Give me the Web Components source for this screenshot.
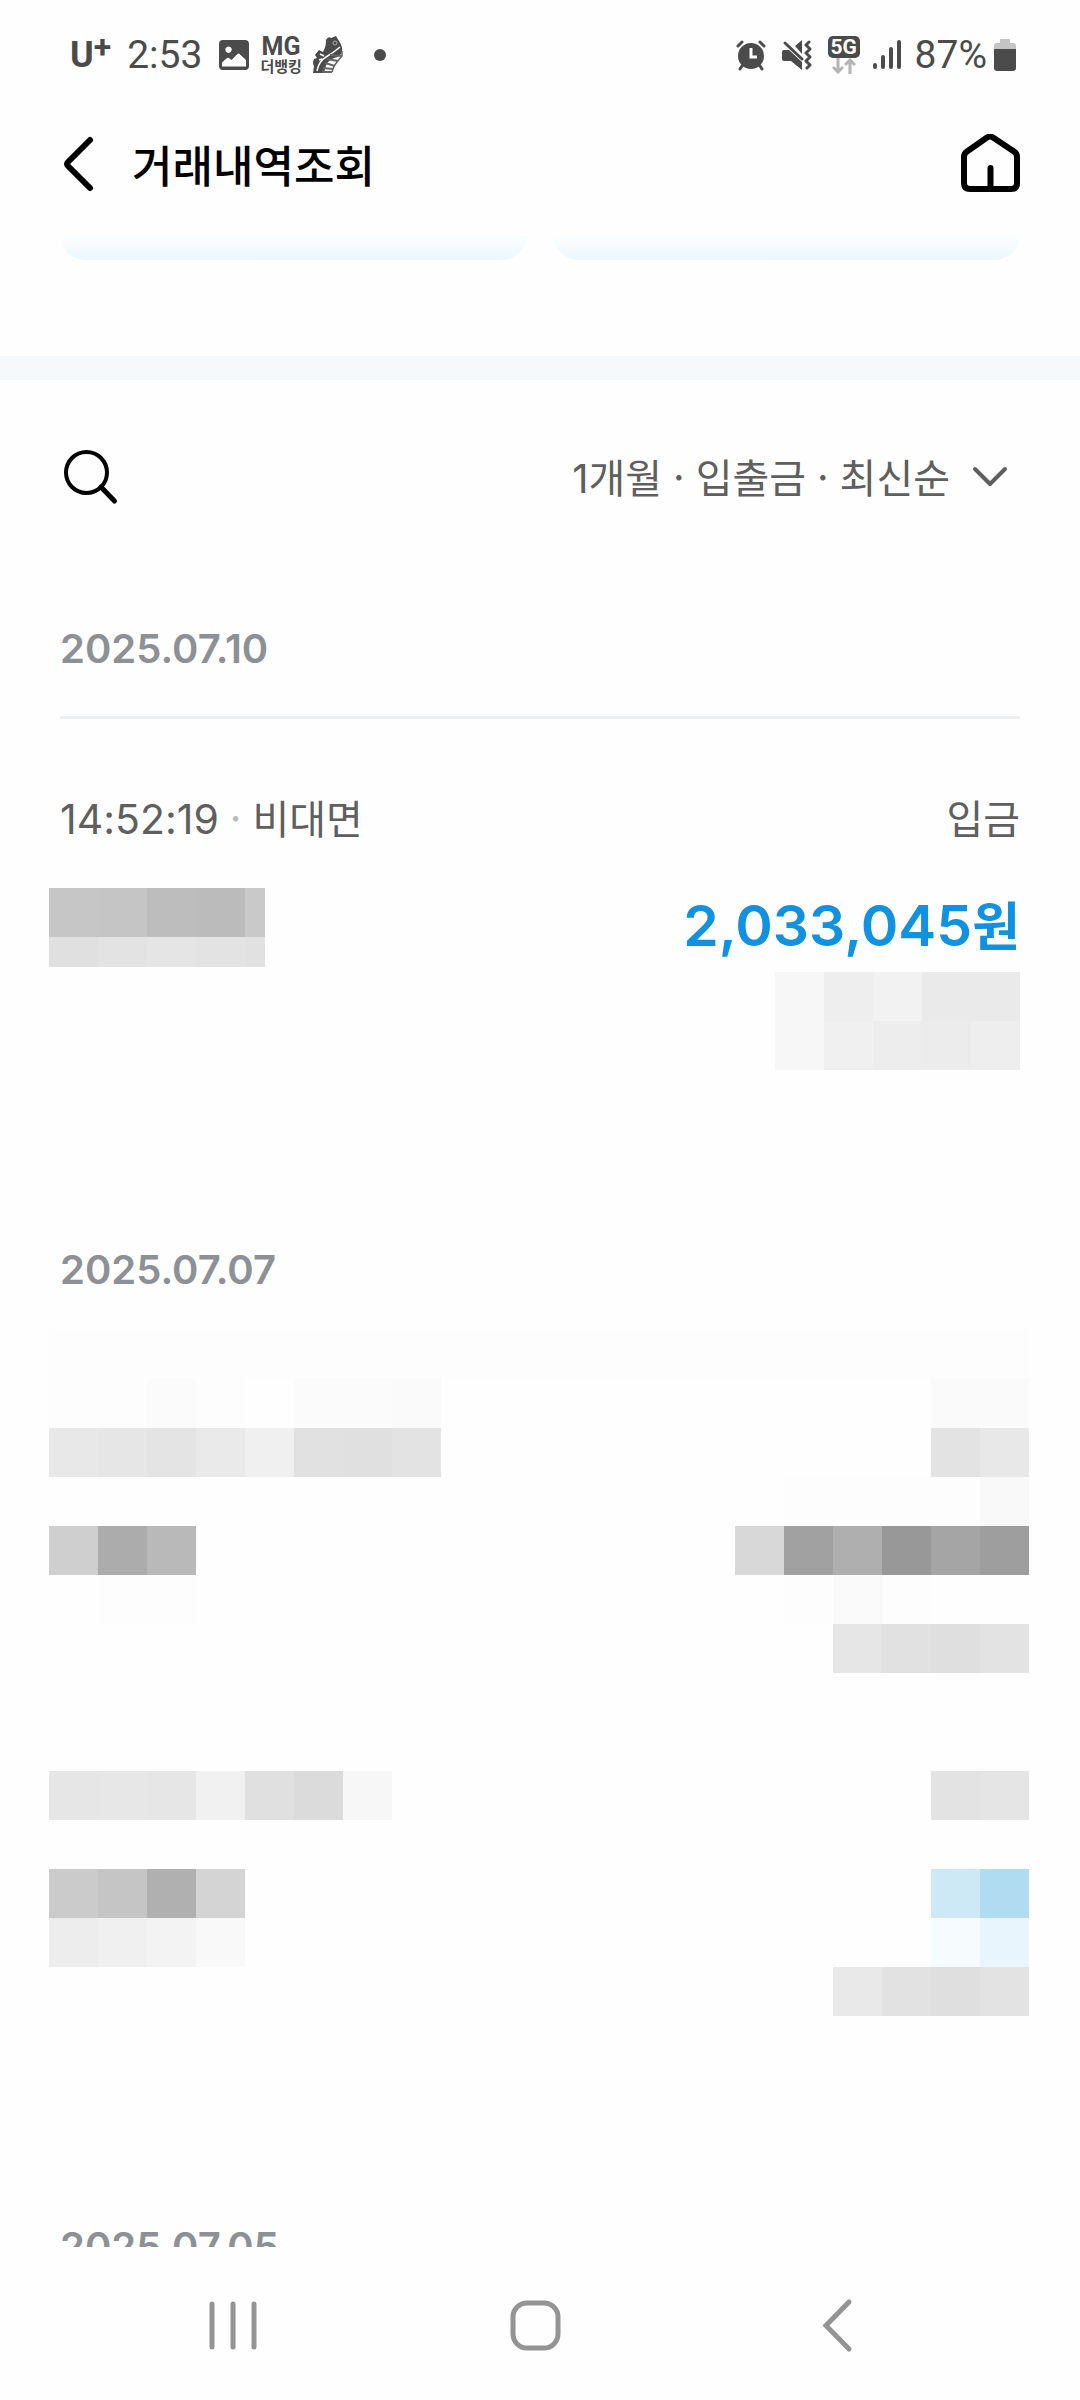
<!DOCTYPE html>
<html lang="ko">
<head>
<meta charset="utf-8">
<meta name="viewport" content="width=device-width, initial-scale=1">
<title>거래내역조회</title>
<style>
  html, body {
    margin: 0;
    background: #fefefe;
  }

  body {
    font-family: Inter, "Noto Sans CJK KR", sans-serif;
    color: #5f5f5f;
  }
</style>
</head>
<body>
<app-shell>
  <status-bar slot="top"></status-bar>
  <page-header slot="top">거래내역조회</page-header>

  <account-actions></account-actions>
  <history-filter period="1" unit="개월">입출금 · 최신순</history-filter>

  <day-group date="2025.07.10" line>
    <history-entry time="14:52:19" method="비대면" kind="입금" amount="2,033,045">
      <pixel-mask slot="name" class="crop" rows="c6 c5 bd bb c9|e0 e3 e5 e3 e1"></pixel-mask>
      <pixel-mask slot="balance" rows="f7 ee f2 ea ea|f7 f0 ed ec ee"></pixel-mask>
    </history-entry>
  </day-group>

  <day-group date="2025.07.07">
    <masked-entry divider>
      <pixel-mask rows="fd fd fb fd - fb fb fa|e8 e6 e4 ea f0 e1 e0 e3|-|cf ac b9|- fd fd"></pixel-mask>
      <pixel-mask slot="end" rows="- - - - fa fa|- - - - e3 e8|- fd fd fd fd f9|d8 a1 af 98 a5 9e|- fd fa fd - -|- - e6 e1 df e3"></pixel-mask>
    </masked-entry>
    <masked-entry>
      <pixel-mask rows="e6 e7 e6 f1 e0 db f7|-|cb c5 b0 d4|ed f0 f3 f9"></pixel-mask>
      <pixel-mask slot="end" rows="- - e3 e5|-|- - cee9f6 b1dbf1|- - f6fbfe e8f5fc|e9 e2 df e3"></pixel-mask>
    </masked-entry>
  </day-group>

  <day-group date="2025.07.05"></day-group>

  <system-nav slot="bottom"></system-nav>
</app-shell>

<script>
class AppShell extends HTMLElement {
  connectedCallback() {
    this.attachShadow({ mode: 'open' });
    this.shadowRoot.innerHTML = `
      <style>
        :host {
          display: flex;
          flex-direction: column;
          height: 100vh;
          overflow: hidden;
        }

        main {
          flex: 1;
          min-height: 0;
          overflow: hidden;
        }
      </style>
      <slot name="top"></slot>
      <main><slot></slot></main>
      <slot name="bottom"></slot>
    `;
  }
}

class StatusBar extends HTMLElement {
  connectedCallback() {
    this.attachShadow({ mode: 'open' });
    this.shadowRoot.innerHTML = `
      <style>
        :host {
          display: flex;
          justify-content: space-between;
          align-items: center;
          height: 110px;
          padding: 0 64px 0 70px;
          box-sizing: border-box;
          font-family: Roboto, "Noto Sans CJK KR", sans-serif;
          color: #4b4b4b;
        }

        .group {
          display: flex;
          align-items: center;
        }

        svg {
          display: block;
        }

        .carrier {
          display: flex;
          align-items: flex-start;
          font-size: 36px;
          line-height: 36px;
          font-weight: 700;
        }

        .carrier sup {
          font-size: 32px;
          line-height: 20px;
          vertical-align: top;
        }

        .time {
          margin-left: 16px;
          font-size: 39px;
          line-height: 40px;
        }

        .photo {
          margin-left: 17px;
        }

        .bank {
          display: flex;
          flex-direction: column;
          align-items: center;
          margin-left: 11px;
          font-size: 25px;
          line-height: 24px;
          font-weight: 700;
        }

        .bank small {
          font-size: 15px;
          line-height: 16px;
        }

        .shoe {
          margin-left: 10px;
        }

        .dot {
          width: 12px;
          height: 12px;
          margin-left: 30px;
          border-radius: 50%;
          background: currentColor;
        }

        .mute {
          margin-left: 16px;
        }

        .network {
          display: flex;
          flex-direction: column;
          align-items: center;
          margin-left: 16px;
        }

        .network span {
          width: 32px;
          border-radius: 5px;
          background: #4b4b4b;
          color: #fefefe;
          font-size: 21px;
          line-height: 22px;
          font-weight: 700;
          text-align: center;
        }

        .signal {
          margin-left: 13px;
        }

        .level {
          margin-left: 14px;
          font-size: 39px;
          line-height: 40px;
        }

        .battery {
          margin-left: 7px;
        }
      </style>
      <div class="group">
        <div class="carrier">U<sup>+</sup></div>
        <div class="time">2:53</div>
        <svg class="photo" width="30" height="30" viewBox="0 0 30 30">
          <path fill="currentColor" fill-rule="evenodd" d="M4 0H26Q30 0 30 4V26Q30 30 26 30H4Q0 30 0 26V4Q0 0 4 0ZM9.500 6.500a3.200 3.200 0 1 0 0.010 0ZM3 22.500V26.500H27V20L20.500 14Q19.500 13.200 18.500 14L12.500 20L10 18Q9 17.400 8 18Z"/>
        </svg>
        <div class="bank">MG<small>더뱅킹</small></div>
        <svg class="shoe" width="32" height="40" viewBox="0 0 32 40">
          <path fill="#4b4b4b" d="M14 5Q16 1 19 3L24 1L27 6Q31 12 30 17Q28 22 22 23Q14 25 12 38H1L2 31Q0 28 2 24L5 23L3 20L7 15L11 17Q14 12 14 5Z"/>
          <path fill="none" stroke="#fefefe" stroke-width="1.500" d="M5 36Q7 26 14 22T28 12M7 25L10 24M8 19L12 21"/>
          <circle cx="23" cy="8" r="2" fill="none" stroke="#aaa" stroke-width="1"/>
          <path fill="none" stroke="#666" stroke-width="2" d="M18 20L30 21M15 24L26 26M13 28L23 31M11 33L21 34M10 37H20"/>
          <path fill="none" stroke="#666" stroke-width="1.500" d="M30 16V21L25 27L22 31L20 37"/>
        </svg>
        <div class="dot"></div>
      </div>
      <div class="group">
        <svg width="30" height="32" viewBox="0 0 30 32" fill="none" stroke="currentColor" stroke-linecap="round">
          <circle cx="15" cy="17" r="13" fill="currentColor" stroke="none"/>
          <path stroke-width="3" d="M2 7L6 3M28 7L24 3M6 27L4 30M24 27L26 30"/>
          <path stroke="#fefefe" stroke-width="3" stroke-linecap="butt" d="M15 9V18H21"/>
        </svg>
        <svg class="mute" width="30" height="32" viewBox="0 0 30 32" fill="none" stroke="currentColor">
          <path fill="currentColor" stroke="none" d="M0 13Q0 11 2 11H7L20 23V31L9 22H2Q0 22 0 20ZM13 7L20 1V15Z"/>
          <path stroke-width="3" stroke-linecap="round" d="M3 4L20 20"/>
          <path stroke-width="3" stroke-linejoin="round" stroke-linecap="round" d="M27 3L24 6L28 10L24 14L28 18L24 22L28 26L25 29"/>
        </svg>
        <div class="network">
          <span>5G</span>
          <svg width="24" height="16" viewBox="0 0 24 16" fill="none" stroke="#b4b4b4" stroke-width="3">
            <path d="M6 0V14M1 9L6 14L11 9M18 16V2M13 7L18 2L23 7"/>
          </svg>
        </div>
        <svg class="signal" width="28" height="32" viewBox="0 0 28 32" stroke="currentColor" stroke-width="4" stroke-linecap="round">
          <path d="M2 26V28M10 18V28M18 10V28M26 3V28"/>
        </svg>
        <div class="level">87%</div>
        <svg class="battery" width="22" height="32" viewBox="0 0 22 32">
          <path fill="#c4c4c4" d="M6 0H16V4H19Q22 4 22 7V12H0V7Q0 4 3 4H6Z"/>
          <path fill="currentColor" d="M0 10H22V29Q22 32 19 32H3Q0 32 0 29Z"/>
        </svg>
      </div>
    `;
  }
}

class PageHeader extends HTMLElement {
  connectedCallback() {
    this.attachShadow({ mode: 'open' });
    this.shadowRoot.innerHTML = `
      <style>
        :host {
          display: flex;
          align-items: center;
          height: 108px;
          padding: 0 60px;
          box-sizing: border-box;
          color: #000;
        }

        button, a {
          display: block;
          padding: 0;
          border: 0;
          background: none;
          color: inherit;
        }

        svg {
          display: block;
        }

        h1 {
          flex: 1;
          margin: 0 0 0 36px;
          font-family: "Noto Sans CJK KR", sans-serif;
          font-size: 44px;
          line-height: 60px;
          font-weight: 500;
        }
      </style>
      <button type="button" aria-label="뒤로">
        <svg width="36" height="60" viewBox="0 0 36 60" fill="none" stroke="currentColor" stroke-width="6" stroke-linecap="round" stroke-linejoin="round">
          <path d="M30 6L8 28Q6 30 8 32L30 54"/>
        </svg>
      </button>
      <h1><slot></slot></h1>
      <a href="#" aria-label="홈">
        <svg width="60" height="60" viewBox="0 0 60 60" fill="none" stroke="currentColor" stroke-width="6" stroke-linecap="round" stroke-linejoin="round">
          <path d="M27 3.500Q30 1.500 33 3.500L54 17.500Q57 19.500 57 23V49Q57 55 51 55H10Q4 55 4 49V23Q4 19.500 7 17.500ZM30.500 34V55"/>
        </svg>
      </a>
    `;
  }
}

// Bottom edge of the two action cards, scrolled under the header
class AccountActions extends HTMLElement {
  connectedCallback() {
    this.attachShadow({ mode: 'open' });
    this.shadowRoot.innerHTML = `
      <style>
        :host {
          display: grid;
          grid-template-columns: 1fr 1fr;
          gap: 26px;
          padding: 0 60px 96px;
          border-bottom: 24px solid #f7f8fa;
        }

        div {
          height: 42px;
          border-radius: 0 0 26px 26px;
          background: linear-gradient(#fefefe 40%, #ebf7fe);
        }
      </style>
      <div></div>
      <div></div>
    `;
  }
}

class HistoryFilter extends HTMLElement {
  connectedCallback() {
    this.attachShadow({ mode: 'open' });
    this.shadowRoot.innerHTML = `
      <style>
        :host {
          display: flex;
          justify-content: space-between;
          align-items: center;
          height: 194px;
          padding: 0 60px;
        }

        button {
          display: flex;
          align-items: center;
          padding: 0;
          border: 0;
          background: none;
          color: #5f5f5f;
          font-family: "Noto Sans CJK KR", sans-serif;
          font-size: 40px;
          line-height: 60px;
        }

        svg {
          display: block;
        }

        .search {
          color: #000;
        }

        .period {
          font-family: Inter, sans-serif;
        }

        .sort {
          gap: 22px;
          padding-right: 12px;
        }
      </style>
      <button type="button" class="search" aria-label="검색">
        <svg width="60" height="60" viewBox="0 0 60 60" fill="none" stroke="currentColor" stroke-width="4" stroke-linecap="round">
          <circle cx="26.500" cy="25.500" r="20.500"/>
          <path stroke-width="5" d="M41 40L54.500 54"/>
        </svg>
      </button>
      <button type="button" class="sort">
        <span><span class="period">${this.getAttribute('period')}</span>${this.getAttribute('unit')} · <slot></slot></span>
        <svg width="36" height="24" viewBox="0 0 36 24" fill="none" stroke="currentColor" stroke-width="4" stroke-linecap="round" stroke-linejoin="round">
          <path d="M3 4L18 19L33 4"/>
        </svg>
      </button>
    `;
  }
}

class DayGroup extends HTMLElement {
  connectedCallback() {
    this.attachShadow({ mode: 'open' });
    this.shadowRoot.innerHTML = `
      <style>
        :host {
          display: block;
          padding-top: 51px;
        }

        h2 {
          margin: 0 60px;
          color: #8d9095;
          font-size: 40px;
          line-height: 48px;
          font-weight: 600;
        }

        :host([line]) h2 {
          padding-bottom: 43px;
          border-bottom: 3px solid #eceef2;
        }
      </style>
      <h2>${this.getAttribute('date')}</h2>
      <slot></slot>
    `;
  }
}

class HistoryEntry extends HTMLElement {
  connectedCallback() {
    this.attachShadow({ mode: 'open' });
    this.shadowRoot.innerHTML = `
      <style>
        :host {
          display: block;
          padding: 77px 60px 125px;
          font-size: 40px;
          line-height: 48px;
        }

        .row {
          display: flex;
          justify-content: space-between;
          align-items: flex-start;
        }

        .time {
          font-size: 41px;
          line-height: 1;
        }

        .sep {
          font-family: "Noto Sans CJK KR", sans-serif;
          line-height: 1;
          color: #b6b9bd;
        }

        .detail {
          margin-top: 44px;
        }

        .name {
          margin-left: -11px;
        }

        .sum {
          display: flex;
          flex-direction: column;
          align-items: flex-end;
          gap: 8px;
        }

        .amount {
          color: #1192e0;
          font-size: 57px;
          line-height: 76px;
          font-weight: 600;
        }

        .won {
          font-size: 52px;
          line-height: 1;
        }
      </style>
      <div class="row">
        <div><span class="time">${this.getAttribute('time')}</span><span class="sep"> · </span>${this.getAttribute('method')}</div>
        <div>${this.getAttribute('kind')}</div>
      </div>
      <div class="row detail">
        <div class="name"><slot name="name"></slot></div>
        <div class="sum">
          <div class="amount">${this.getAttribute('amount')}<span class="won">원</span></div>
          <slot name="balance"></slot>
        </div>
      </div>
    `;
  }
}

class MaskedEntry extends HTMLElement {
  connectedCallback() {
    this.attachShadow({ mode: 'open' });
    this.shadowRoot.innerHTML = `
      <style>
        :host {
          display: flex;
          justify-content: space-between;
          align-items: flex-start;
          margin: 0 51px 0 49px;
          padding-bottom: 98px;
        }

        :host([divider]) {
          margin-top: 36px;
          border-top: 49px solid #fdfdfd;
        }

        :host(:last-child) {
          padding-bottom: 156px;
        }
      </style>
      <slot></slot>
      <slot name="end"></slot>
    `;
  }
}

// rows="c6 c5|e0 -": one shade per cell, "|" starts a row, "-" leaves a cell clear
class PixelMask extends HTMLElement {
  connectedCallback() {
    const rows = this.getAttribute('rows').split('|').map((row) => row.split(' '));
    const cells = rows.map((row) => `<div class="row">${row.map((shade) => {
      const color = shade === '-' ? 'transparent' : '#' + (shade.length === 2 ? shade.repeat(3) : shade);
      return `<i style="background: ${color}"></i>`;
    }).join('')}</div>`).join('');

    this.attachShadow({ mode: 'open' });
    this.shadowRoot.innerHTML = `
      <style>
        :host {
          display: block;
          overflow: hidden;
        }

        :host(.crop) {
          width: 216px;
          height: 79px;
        }

        .row {
          display: flex;
          height: 49px;
        }

        i {
          flex: none;
          width: 49px;
        }
      </style>
      ${cells}
    `;
  }
}

class SystemNav extends HTMLElement {
  connectedCallback() {
    this.attachShadow({ mode: 'open' });
    this.shadowRoot.innerHTML = `
      <style>
        :host {
          display: flex;
          align-items: center;
          height: 153px;
          padding: 2px 90px 0 81px;
          box-sizing: border-box;
          background: #fefefe;
          color: #949494;
        }

        button {
          flex: 1;
          display: flex;
          justify-content: center;
          padding: 0;
          border: 0;
          background: none;
          color: inherit;
        }
      </style>
      <button type="button" aria-label="최근 앱">
        <svg width="60" height="60" viewBox="0 0 60 60" stroke="currentColor" stroke-width="5" stroke-linecap="round">
          <path d="M9 9V52M30 9V52M51 9V52"/>
        </svg>
      </button>
      <button type="button" aria-label="홈 화면">
        <svg width="60" height="60" viewBox="0 0 60 60" fill="none" stroke="currentColor" stroke-width="5">
          <rect x="7" y="8" width="45" height="45" rx="14"/>
        </svg>
      </button>
      <button type="button" aria-label="이전">
        <svg width="60" height="60" viewBox="0 0 60 60" fill="none" stroke="currentColor" stroke-width="5" stroke-linecap="round">
          <path d="M40 7L17 30.500L40 54"/>
        </svg>
      </button>
    `;
  }
}

customElements.define('app-shell', AppShell);
customElements.define('status-bar', StatusBar);
customElements.define('page-header', PageHeader);
customElements.define('account-actions', AccountActions);
customElements.define('history-filter', HistoryFilter);
customElements.define('day-group', DayGroup);
customElements.define('history-entry', HistoryEntry);
customElements.define('masked-entry', MaskedEntry);
customElements.define('pixel-mask', PixelMask);
customElements.define('system-nav', SystemNav);
</script>
</body>
</html>
